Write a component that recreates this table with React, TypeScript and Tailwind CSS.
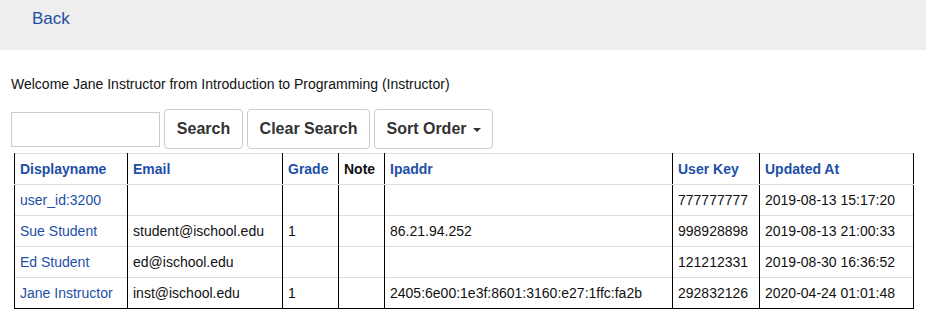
const rows = [
  { name: "user_id:3200", email: "", grade: "", note: "", ip: "", key: "777777777", updated: "2019-08-13 15:17:20" },
  { name: "Sue Student", email: "student@ischool.edu", grade: "1", note: "", ip: "86.21.94.252", key: "998928898", updated: "2019-08-13 21:00:33" },
  { name: "Ed Student", email: "ed@ischool.edu", grade: "", note: "", ip: "", key: "121212331", updated: "2019-08-30 16:36:52" },
  { name: "Jane Instructor", email: "inst@ischool.edu", grade: "1", note: "", ip: "2405:6e00:1e3f:8601:3160:e27:1ffc:fa2b", key: "292832126", updated: "2020-04-24 01:01:48" },
];

const headers = [
  { label: "Displayname", link: true, w: "w-[113px]" },
  { label: "Email", link: true, w: "w-[155px]" },
  { label: "Grade", link: true, w: "w-[56px]" },
  { label: "Note", link: false, w: "w-[46px]" },
  { label: "Ipaddr", link: true, w: "w-[288px]" },
  { label: "User Key", link: true, w: "w-[87px]" },
  { label: "Updated At", link: true, w: "w-[154px]" },
];

const btn =
  "h-[40px] px-0 rounded-[4px] border border-[#ccc] bg-white text-[16px] font-bold text-[#333] whitespace-nowrap";

export default function App() {
  return (
    <div className="min-h-[324px] bg-white text-[14px] leading-[20px] text-[#111] font-['Liberation_Sans',Arial,sans-serif]">
      <div className="h-[50px] bg-[#eeeeee] pt-[8px] px-[32px]">
        <a href="#" className="text-[17px] leading-[22px] text-[#1d4fa6]">
          Back
        </a>
      </div>

      <p className="mt-[24px] ml-[11px]">
        Welcome Jane Instructor from Introduction to Programming (Instructor)
      </p>

      <div className="mt-[15px] ml-[11px] flex items-center gap-[4px]">
        <input type="text" className="w-[149px] h-[35px] border border-[#ccc] px-2" />
        <button className={btn + " w-[79px]"}>Search</button>
        <button className={btn + " w-[123px]"}>Clear Search</button>
        <button className={btn + " w-[119px] flex items-center justify-center gap-[6px]"}>
          Sort Order
          <span className="border-x-[4px] border-t-[4px] border-x-transparent border-t-[#333] mt-[2px]" />
        </button>
      </div>

      <table className="mt-[4px] ml-[14px] border-collapse border-x border-black border-b">
        <thead>
          <tr className="border-t border-[#ddd]">
            {headers.map((h) => (
              <th
                key={h.label}
                className={
                  h.w +
                  " h-[31px] px-[5px] text-left font-bold border-x border-black border-b border-b-[#ddd] " +
                  (h.link ? "text-[#1d4fa6]" : "text-[#111]")
                }
              >
                {h.label}
              </th>
            ))}
          </tr>
        </thead>
        <tbody>
          {rows.map((r) => (
            <tr key={r.name} className="border-b border-[#ddd] last:border-black">
              {[r.name, r.email, r.grade, r.note, r.ip, r.key, r.updated].map((v, i) => (
                <td
                  key={i}
                  className={
                    "h-[31px] px-[5px] border-x border-black " +
                    (i === 0 ? "text-[#1d4fa6]" : "text-[#111]")
                  }
                >
                  {v}
                </td>
              ))}
            </tr>
          ))}
        </tbody>
      </table>
    </div>
  );
}
